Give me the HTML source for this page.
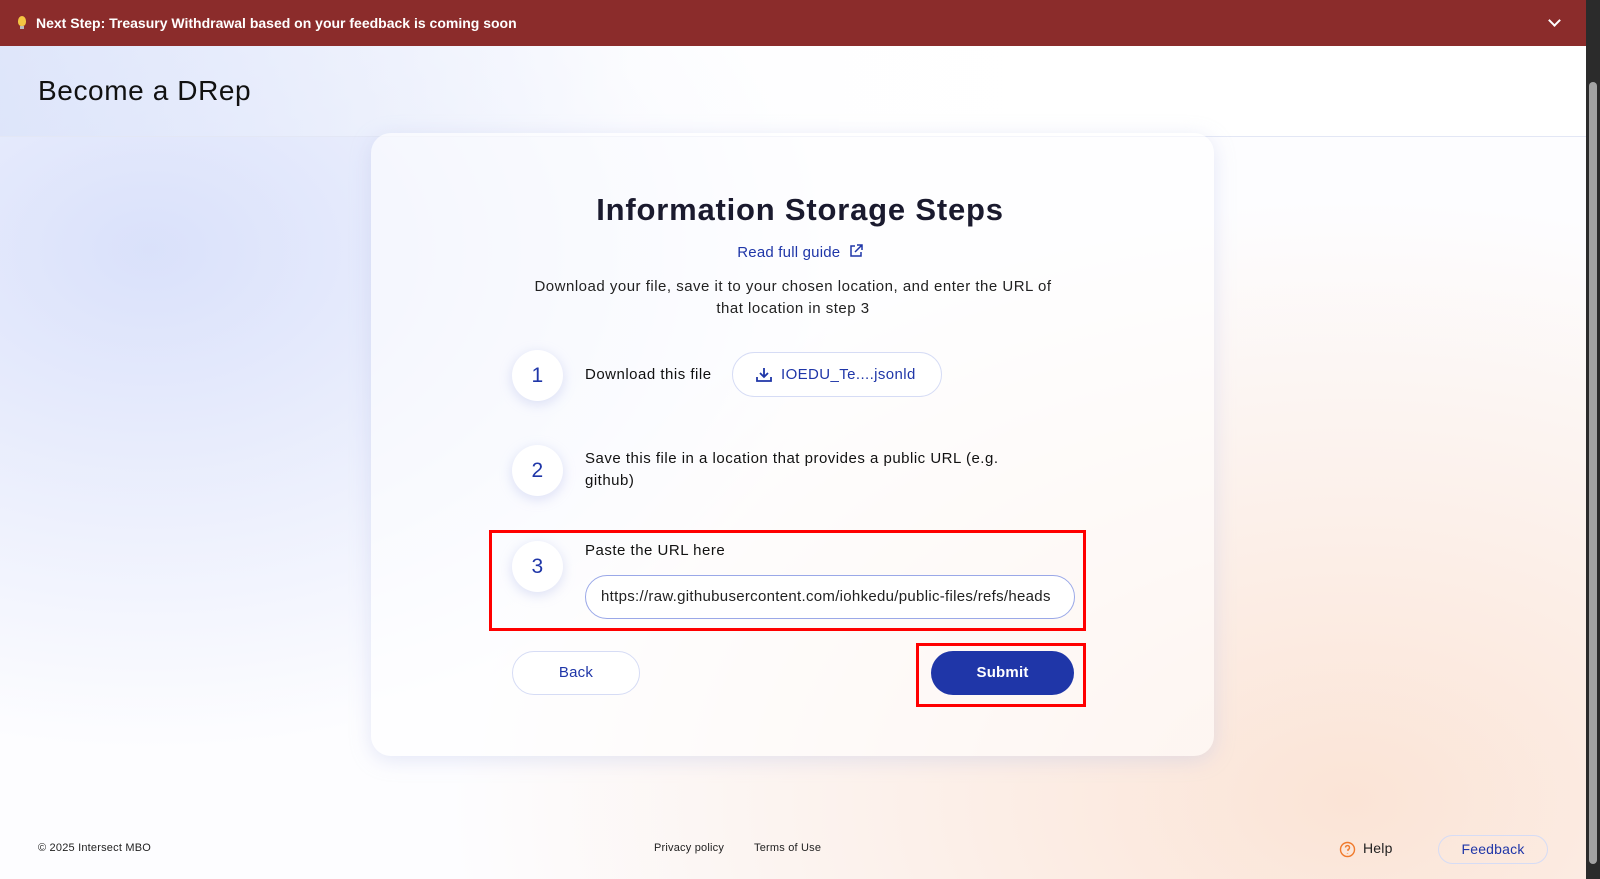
<!DOCTYPE html>
<html><head><meta charset="utf-8"><style>
*{box-sizing:border-box;margin:0;padding:0}
body{width:1600px;height:879px;overflow:hidden;position:relative;font-family:"Liberation Sans",sans-serif;color:#1a1a2e;letter-spacing:0.2px;
background:radial-gradient(ellipse 700px 500px at 150px 250px,rgba(214,222,250,0.9),rgba(214,222,250,0) 100%),radial-gradient(ellipse 900px 600px at 1350px 800px,rgba(251,228,214,1),rgba(251,228,214,0) 100%),#fdfdff;}
.banner{position:absolute;left:0;top:0;width:1586px;height:46px;background:#8b2c2b;color:#fff;font-weight:bold;font-size:14px;line-height:46px;padding-left:36px;letter-spacing:0}
.bulb{position:absolute;left:18px;top:16px;width:8px;height:10px;background:#f4c542;border-radius:50% 50% 40% 40%}
.bulb:after{content:"";position:absolute;left:2px;top:10px;width:4px;height:3px;background:#bbb}
.chev{position:absolute;left:1550px;top:16px;width:9px;height:9px;border-right:2px solid #fff;border-bottom:2px solid #fff;transform:rotate(45deg)}
.sb{position:absolute;left:1586px;top:0;width:14px;height:879px;background:#2b2b2b}
.sb .th{position:absolute;left:3px;top:82px;width:8px;height:782px;background:#a3a3a3;border-radius:4px}
.header{position:absolute;left:0;top:46px;width:1586px;height:91px;border-bottom:1px solid #e3e7f5;background:linear-gradient(90deg,rgba(220,228,250,.8),rgba(255,255,255,.6) 40%,rgba(255,255,255,0.95) 70%)}
.header h1{position:absolute;left:38px;top:29px;font-size:28px;font-weight:normal;color:#111;letter-spacing:0.6px}
.card{position:absolute;left:371px;top:133px;width:843px;height:623px;background:rgba(255,255,255,.6);border-radius:20px;box-shadow:0 4px 20px rgba(180,190,230,.35)}
.h2{position:absolute;left:0;width:1600px;top:192px;text-align:center;font-size:31px;font-weight:bold;color:#1a1a2e;letter-spacing:0.8px}
.guide{position:absolute;left:0;width:1600px;top:244px;text-align:center;color:#1f36a8;font-size:15px}
.desc{position:absolute;left:523px;width:540px;top:276px;text-align:center;font-size:15px;line-height:22px;color:#222;letter-spacing:0.5px}
.circ{position:absolute;width:51px;height:51px;border-radius:50%;background:#fff;box-shadow:0 3px 12px rgba(170,180,230,.4);color:#1f36a8;font-size:21px;text-align:center;line-height:51px}
.t{position:absolute;left:585px;font-size:15px;color:#111;line-height:22px;letter-spacing:0.5px}
.dl{position:absolute;left:732px;top:352px;width:210px;height:45px;border:1px solid #d6dcf5;border-radius:23px;background:#fff;color:#1f36a8;font-size:15px;line-height:43px;padding-left:48px;letter-spacing:0.4px}
.inp{position:absolute;left:585px;top:575px;width:490px;height:44px;border:1px solid #9aa8e8;border-radius:22px;background:#fff;font-size:15px;line-height:42px;padding-left:15px;white-space:nowrap;overflow:hidden;color:#222;letter-spacing:0.3px}
.red{position:absolute;border:3px solid #f00}
.back{position:absolute;left:512px;top:651px;width:128px;height:44px;border:1px solid #d6dcf5;border-radius:22px;background:#fff;color:#1f36a8;font-size:15px;text-align:center;line-height:42px}
.sub{position:absolute;left:931px;top:651px;width:143px;height:44px;border-radius:22px;background:#1f36a8;color:#fff;font-weight:bold;font-size:15px;text-align:center;line-height:44px}
.f{position:absolute;top:842px;font-size:12px;color:#222}
.fb{position:absolute;left:1438px;top:835px;width:110px;height:29px;border:1px solid #d6dcf5;border-radius:15px;color:#1f36a8;font-size:14px;text-align:center;line-height:27px}
</style></head><body>
<div class="banner"><span class="bulb"></span>Next Step: Treasury Withdrawal based on your feedback is coming soon<span class="chev"></span></div>
<div class="sb"><div class="th"></div></div>
<div class="header"><h1>Become a DRep</h1></div>
<div class="card"></div>
<div class="h2">Information Storage Steps</div>
<div class="guide">Read full guide <svg width="14" height="14" viewBox="0 0 14 14" style="vertical-align:-1px;margin-left:4px" fill="none" stroke="#1f36a8" stroke-width="1.5"><path d="M6 2H2v10h10V8M8 1h5v5M13 1 6 8"/></svg></div>
<div class="desc">Download your file, save it to your chosen location, and enter the URL of that location in step 3</div>
<div class="circ" style="left:512px;top:350px">1</div>
<div class="circ" style="left:512px;top:445px">2</div>
<div class="circ" style="left:512px;top:541px">3</div>
<div class="t" style="top:364px">Download this file</div>
<div class="dl"><svg width="18" height="18" viewBox="0 0 18 18" style="position:absolute;left:22px;top:13px" fill="none" stroke="#1f36a8" stroke-width="1.8"><path d="M9 2v9M5 7l4 4 4-4M2 11v4h14v-4"/></svg>IOEDU_Te....jsonld</div>
<div class="t" style="top:448px;width:440px">Save this file in a location that provides a public URL (e.g. github)</div>
<div class="t" style="top:540px">Paste the URL here</div>
<div class="inp">https://raw.githubusercontent.com/iohkedu/public-files/refs/heads</div>
<div class="red" style="left:489px;top:530px;width:597px;height:101px"></div>
<div class="back">Back</div>
<div class="sub">Submit</div>
<div class="red" style="left:916px;top:643px;width:170px;height:64px"></div>
<div class="f" style="left:38px;font-size:11px">© 2025 Intersect MBO</div>
<div class="f" style="left:654px;font-size:11px">Privacy policy</div>
<div class="f" style="left:754px;font-size:11px">Terms of Use</div>
<svg style="position:absolute;left:1339px;top:841px" width="17" height="17" viewBox="0 0 17 17" fill="none" stroke="#f07a2c" stroke-width="1.4"><circle cx="8.5" cy="8.5" r="7"/><path d="M6.5 6.5a2 2 0 1 1 2.5 2v1.5M8.5 12v.5"/></svg>
<div class="f" style="left:1363px;top:840px;font-size:14px">Help</div>
<div class="fb">Feedback</div>
</body></html>
